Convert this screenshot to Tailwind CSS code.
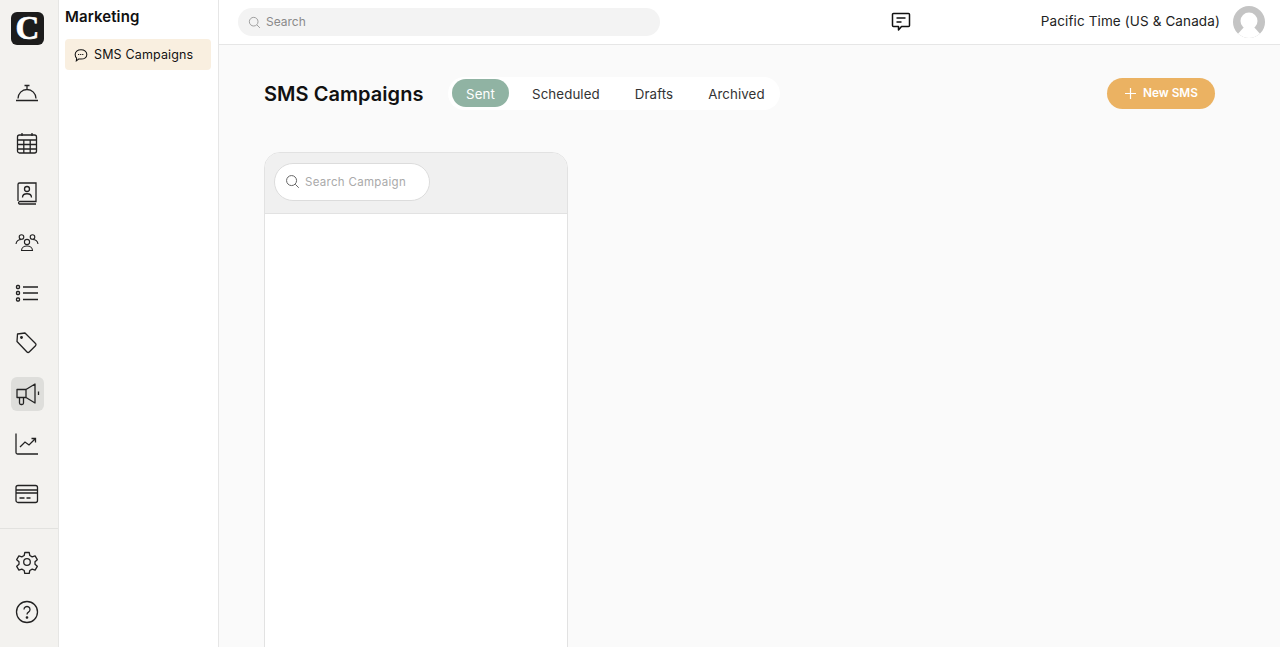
<!DOCTYPE html>
<html lang="en">
<head>
  <meta charset="UTF-8">
  <title>SMS Campaigns</title>
  <script src="https://cdn.jsdelivr.net/npm/@tailwindcss/browser@4"></script>
</head>
<body class="h-[647px] overflow-hidden bg-[#fafafa] font-['Inter',sans-serif] text-[#111]">
<div class="flex h-[647px]">

  <!-- Icon rail -->
  <aside class="w-[59px] shrink-0 bg-[#f3f2ef] border-r border-[#e6e6e4] flex flex-col items-center">
    <div class="w-full pr-[4px] flex flex-col items-center">
      <div class="ml-[1px] mt-[12px] w-[33px] h-[33px] rounded-[6px] bg-[#1c1c1c] flex items-center justify-center text-white font-['Liberation_Serif',serif] font-bold text-[33px] leading-none [-webkit-text-stroke:0.6px_white]">C</div>
      <nav class="mt-[30.500px] flex flex-col items-center gap-[16.2px] text-[#222]">
        <div class="w-[34px] h-[34px] flex items-center justify-center">
          <svg width="24" height="24" viewBox="0 0 24 24" fill="none" stroke="currentColor" stroke-width="1.300"><path d="M1 19.500h22M3 17.500a9 9 0 0 1 18 0M12 8.500V5M9.500 4.500h5"/></svg>
        </div>
        <div class="w-[34px] h-[34px] flex items-center justify-center">
          <svg width="24" height="24" viewBox="0 0 24 24" fill="none" stroke="currentColor" stroke-width="1.300"><rect x="2.500" y="4" width="19" height="18" rx="2"/><path d="M2.500 9h19M2.500 13.500h19M2.500 18h19M8.800 9v13M15.200 9v13M7 2v3M17 2v3"/></svg>
        </div>
        <div class="w-[34px] h-[34px] flex items-center justify-center">
          <svg width="24" height="24" viewBox="0 0 24 24" fill="none" stroke="currentColor" stroke-width="1.300"><path d="M3 20V3.500A1.500 1.500 0 0 1 4.500 2H21v18.500H4.500a1.300 1.300 0 0 0 0 2.500H21"/><circle cx="12" cy="8" r="2.500"/><path d="M7.500 16.500c0-5 9-5 9 0"/></svg>
        </div>
        <div class="w-[34px] h-[34px] flex items-center justify-center">
          <svg width="24" height="24" viewBox="0 0 24 24" fill="none" stroke="currentColor" stroke-width="1.100"><circle cx="6.500" cy="6" r="2.300"/><circle cx="17.500" cy="6" r="2.300"/><circle cx="12" cy="11" r="2.600"/><path d="M1 13c.5-3.500 3-4.500 5.500-4.500M23 13c-.5-3.500-3-4.500-5.500-4.500M6.500 19.500c0-6 11-6 11 0z"/></svg>
        </div>
        <div class="w-[34px] h-[34px] flex items-center justify-center">
          <svg width="24" height="24" viewBox="0 0 24 24" fill="none" stroke="currentColor" stroke-width="1.300"><rect x="1.500" y="4.500" width="3" height="3" rx="1"/><rect x="1.500" y="10.500" width="3" height="3" rx="1"/><rect x="1.500" y="17" width="3" height="3" rx="1"/><path d="M8 6h15M8 12h15M8 18.500h15"/></svg>
        </div>
        <div class="w-[34px] h-[34px] flex items-center justify-center">
          <svg width="24" height="24" viewBox="0 0 24 24" fill="none" stroke="currentColor" stroke-width="1.300"><path d="M2.500 3 10 2l10.500 10.500a1.500 1.500 0 0 1 0 2.200l-6.300 6.300a1.500 1.500 0 0 1-2.200 0L2 10.500z" stroke-linejoin="round"/><circle cx="6.500" cy="6.500" r=".8" fill="currentColor"/></svg>
        </div>
        <div class="ml-[1px] w-[33px] h-[34px] rounded-[6px] bg-[#dededb] flex items-center justify-center">
          <svg width="24" height="24" viewBox="0 0 24 24" fill="none" stroke="currentColor" stroke-width="1.300"><path d="M1 7.500h9v8H1zM10 7.500 19 2v19l-9-5.500M3.500 15.500v5.500A1.500 1.500 0 0 0 5 22.500h1A1.500 1.500 0 0 0 7.500 21v-5.500" stroke-linejoin="round"/><path d="M22.500 9.500V13"/></svg>
        </div>
        <div class="w-[34px] h-[34px] flex items-center justify-center">
          <svg width="24" height="24" viewBox="0 0 24 24" fill="none" stroke="currentColor" stroke-width="1.300"><path d="M1 1.500v19A1.500 1.500 0 0 0 2.500 22H23M5 15l5-5 4 3 6-6M16.500 6.500h4v4"/></svg>
        </div>
        <div class="w-[34px] h-[34px] flex items-center justify-center">
          <svg width="24" height="24" viewBox="0 0 24 24" fill="none" stroke="currentColor" stroke-width="1.300"><rect x="1" y="3.500" width="21.500" height="17" rx="2"/><path d="M1 8h21.500M1 11h21.500M4.500 16h5M11.500 16h4"/></svg>
        </div>
      </nav>
    </div>
    <div class="mt-[16.500px] w-full border-t border-[#e2e2df] pr-[4px] flex flex-col items-center pt-[16px] gap-[16px] text-[#222]">
      <div class="w-[34px] h-[34px] flex items-center justify-center">
        <svg width="24" height="24" viewBox="0 0 24 24" fill="none" stroke="currentColor" stroke-width="1.300"><path d="M9.800 2.500h4.400l.6 3 2.400 1.400 2.900-1 2.200 3.800-2.300 2v2.600l2.300 2-2.200 3.800-2.900-1-2.400 1.400-.6 3H9.800l-.6-3-2.400-1.400-2.900 1-2.200-3.800 2.300-2v-2.600l-2.300-2 2.200-3.800 2.900 1 2.400-1.400z" stroke-linejoin="round"/><circle cx="12" cy="12" r="3.300"/></svg>
      </div>
      <div class="w-[34px] h-[34px] flex items-center justify-center">
        <svg width="24" height="24" viewBox="0 0 24 24" fill="none" stroke="currentColor" stroke-width="1.300"><circle cx="12" cy="12" r="10.500"/><path d="M9 9.500a3 3 0 1 1 4.500 2.600c-1 .6-1.500 1.200-1.500 2.400"/><circle cx="12" cy="17.500" r=".7" fill="currentColor"/></svg>
      </div>
    </div>
  </aside>

  <!-- Section sidebar -->
  <aside class="w-[160px] shrink-0 bg-white border-r border-[#e6e6e6] pl-[6px] pr-[7px]">
    <h2 class="mt-[8px] text-[15px] leading-[18px] font-semibold tracking-[.1px]">Marketing</h2>
    <a class="mt-[13px] h-[31px] rounded-[4px] bg-[#f9efe0] flex items-center pl-[9px] pt-[1px] gap-[6px] text-[12.500px] tracking-[.15px]">
      <svg width="14" height="14" viewBox="0 0 24 24" fill="none" stroke="currentColor" stroke-width="1.800"><path d="M12 3c6 0 10 3.500 10 8s-4 8-10 8H8l-4 3 .5-4.500C3 16 2 13.500 2 11c0-4.500 4-8 10-8z"/><path d="M7 11h10" stroke-dasharray="2 1.500"/></svg>
      SMS Campaigns
    </a>
  </aside>

  <div class="flex-1 min-w-0 flex flex-col">
    <!-- Top bar -->
    <header class="h-[45px] shrink-0 bg-white border-b border-[#e6e6e6] flex items-center pl-[19px] pr-[15px]">
      <div class="w-[422px] h-[28px] rounded-full bg-[#f3f3f3] flex items-center pl-[10px] gap-[5px] text-[12px] text-[#8a8a8a]">
        <svg width="13" height="13" viewBox="0 0 24 24" fill="none" stroke="#999" stroke-width="1.700"><circle cx="10.500" cy="10.500" r="8"/><path d="m16.500 16.500 5.500 5.500"/></svg>
        Search
      </div>
      <svg class="ml-[231px]" width="20" height="20" viewBox="0 0 20 20" fill="none" stroke="#111" stroke-width="1.500"><path d="M2.500 1.500h15a1 1 0 0 1 1 1v11a1 1 0 0 1-1 1h-7l-3 3.500v-3.500h-5a1 1 0 0 1-1-1v-11a1 1 0 0 1 1-1z" stroke-linejoin="round"/><path d="M5.500 6h9M5.500 10h5"/></svg>
      <span class="ml-auto pb-[1px] text-[13.500px] tracking-[.12px] text-[#222]">Pacific Time (US &amp; Canada)</span>
      <div class="ml-[13px] w-[32px] h-[32px] rounded-full bg-[#c4c4c4] overflow-hidden">
        <svg width="32" height="32" viewBox="0 0 32 32" fill="#fff"><circle cx="16" cy="15" r="8.500"/><path d="M12 20 3 30l3 2h20l3-2-9-10z"/></svg>
      </div>
    </header>

    <!-- Main -->
    <main class="flex-1 min-h-0 overflow-hidden pl-[45px] pr-[65px]">
      <div class="mt-[32px] h-[33px] flex items-center">
        <h1 class="w-[184px] shrink-0 pt-[2px] text-[20px] leading-[33px] font-semibold tracking-[.05px]">SMS Campaigns</h1>
        <div class="h-[33px] w-[332px] rounded-full bg-white flex items-start pl-[4px] text-[13.300px] leading-[34px] text-[#333] tracking-[.1px]">
          <span class="mt-[2px] w-[57px] h-[28px] leading-[30px] rounded-full bg-[#90b3a3] text-white text-center">Sent</span>
          <span class="ml-[23px]">Scheduled</span>
          <span class="ml-[35px]">Drafts</span>
          <span class="ml-[35px]">Archived</span>
        </div>
        <button class="ml-auto h-[31px] w-[108px] rounded-full bg-[#ebb262] text-white text-[11.800px] font-semibold flex items-center justify-center gap-[6px]">
          <svg width="13" height="13" viewBox="0 0 13 13" fill="none" stroke="#fff" stroke-width="1.200"><path d="M6.500 1v11M1 6.500h11"/></svg>
          <span class="pt-[1px]">New SMS</span>
        </button>
      </div>

      <section class="mt-[42px] w-[304px] h-[600px] rounded-t-[16px] border border-[#e2e2e2] bg-white overflow-hidden">
        <div class="h-[61px] bg-[#f0f0f0] border-b border-[#e2e2e2] flex items-center pl-[9px] pb-[3px]">
          <div class="w-[156px] h-[38px] rounded-full bg-white border border-[#dcdcdc] flex items-center pl-[10px] gap-[5px] text-[11.500px] leading-[18px] text-[#aaa] tracking-[.3px]">
            <svg width="15" height="15" viewBox="0 0 24 24" fill="none" stroke="#666" stroke-width="1.600"><circle cx="10.500" cy="10.500" r="8"/><path d="m16.500 16.500 5.500 5.500"/></svg>
            <span class="pt-[1px]">Search Campaign</span>
          </div>
        </div>
      </section>
    </main>
  </div>
</div>
</body>
</html>
